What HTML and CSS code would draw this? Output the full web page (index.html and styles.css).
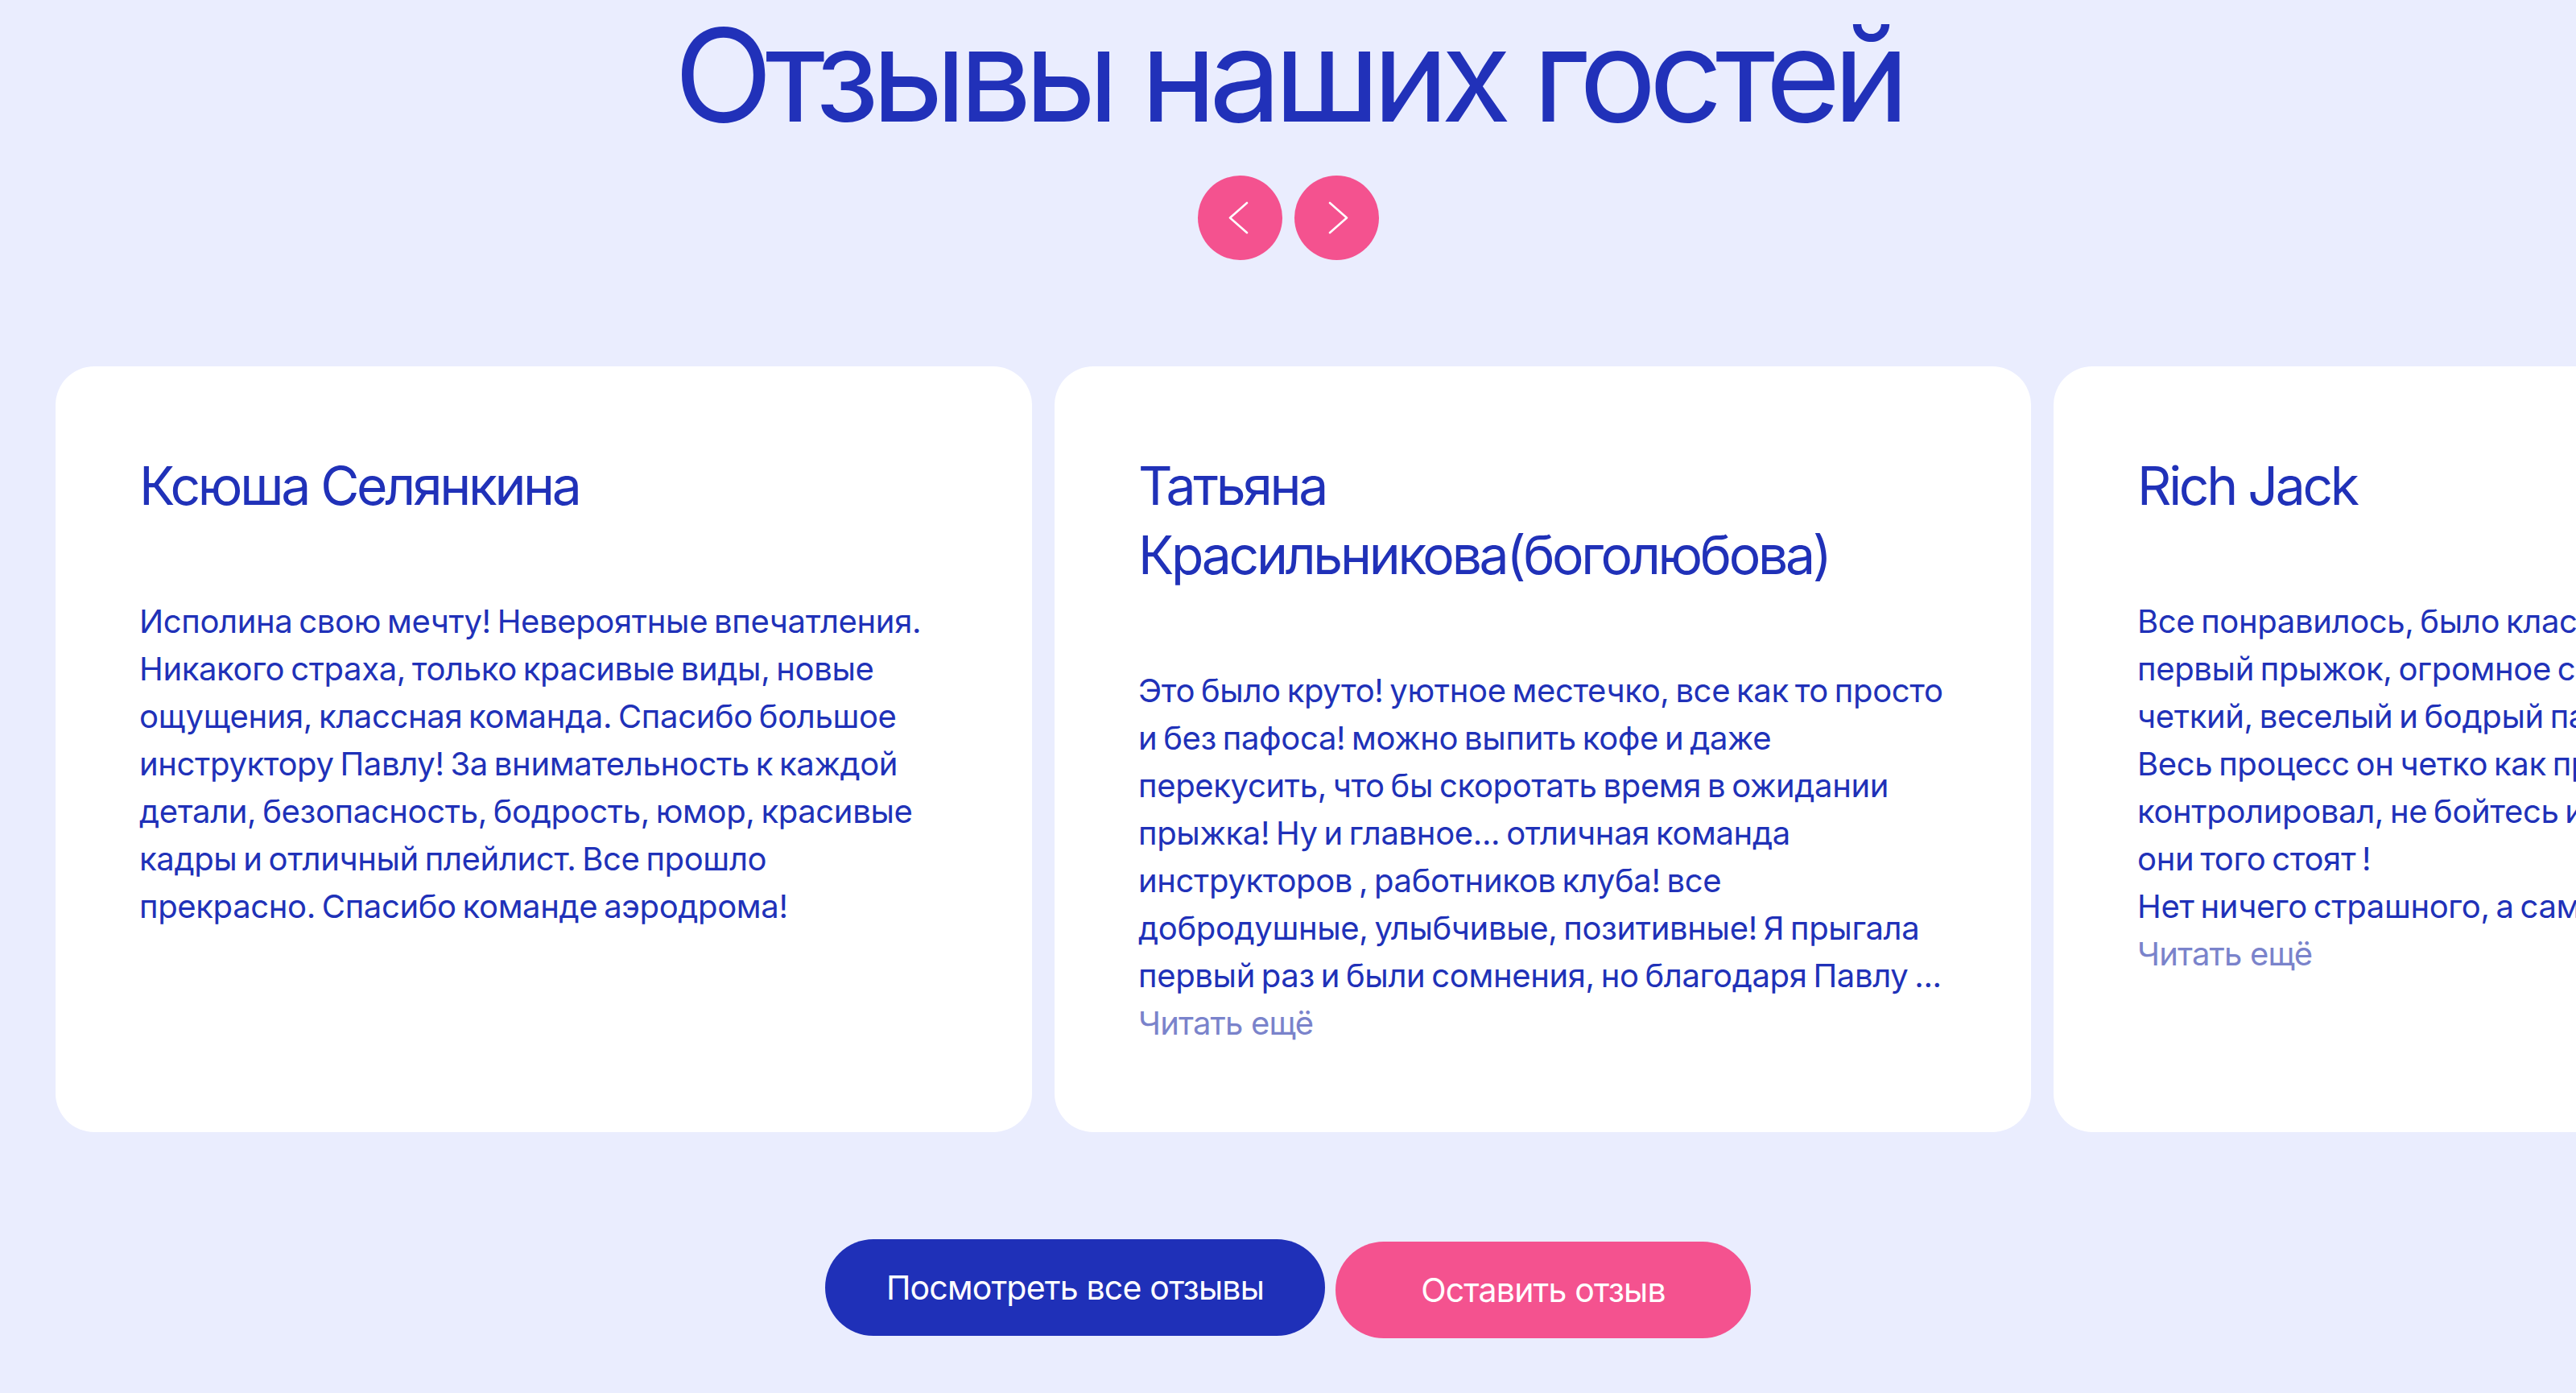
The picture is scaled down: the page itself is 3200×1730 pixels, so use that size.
FILE: index.html
```html
<!DOCTYPE html>
<html lang="ru">
<head>
<meta charset="utf-8">
<title>Отзывы наших гостей</title>
<link rel="stylesheet" href="styles.css">
</head>
<body>
<section class="reviews">
  <h2 class="reviews-title">Отзывы наших гостей</h2>

  <div class="reviews-nav">
    <button class="nav-btn" type="button" aria-label="Назад">
      <svg viewBox="0 0 105 105" width="105" height="105"><path d="M61 34 L40 52.5 L61 71"/></svg>
    </button>
    <button class="nav-btn" type="button" aria-label="Вперёд">
      <svg viewBox="0 0 105 105" width="105" height="105"><path d="M44 34 L65 52.5 L44 71"/></svg>
    </button>
  </div>

  <div class="reviews-viewport">
    <div class="reviews-track">
      <article class="review-card">
        <h3 class="review-name">Ксюша Селянкина</h3>
        <p class="review-text">Исполина свою мечту! Невероятные впечатления. Никакого страха, только красивые виды, новые ощущения, классная команда. Спасибо большое инструктору Павлу! За внимательность к каждой детали, безопасность, бодрость, юмор, красивые кадры и отличный плейлист. Все прошло прекрасно. Спасибо команде аэродрома!</p>
      </article>

      <article class="review-card">
        <h3 class="review-name">Татьяна Красильникова(боголюбова)</h3>
        <p class="review-text">Это было круто! уютное местечко, все как то просто и без пафоса! можно выпить кофе и даже перекусить, что бы скоротать время в ожидании прыжка! Ну и главное... отличная команда инструкторов , работников клуба! все добродушные, улыбчивые, позитивные! Я прыгала первый раз и были сомнения, но благодаря Павлу&nbsp;...</p>
        <a class="review-more" href="#">Читать ещё</a>
      </article>

      <article class="review-card">
        <h3 class="review-name">Rich Jack</h3>
        <p class="review-text">Все понравилось, было классно! Совершил свой<br>первый прыжок, огромное спасибо Павлу за<br>четкий, веселый и бодрый парашютный настрой!<br>Весь процесс он четко как профессионал<br>контролировал, не бойтесь и прыгайте,<br>они того стоят !<br>Нет ничего страшного, а самое главное ...</p>
        <a class="review-more" href="#">Читать ещё</a>
      </article>
    </div>
  </div>

  <div class="reviews-actions">
    <a class="btn btn-primary" href="#">Посмотреть все отзывы</a>
    <a class="btn btn-accent" href="#">Оставить отзыв</a>
  </div>
</section>
</body>
</html>
```

FILE: styles.css
```css
html, body {
  margin: 0;
  padding: 0;
}

body {
  background: #eaedfe;
  font-family: Inter, "Noto Sans", "Liberation Sans", sans-serif;
  color: #2031b8;
  overflow: hidden;
}

.reviews {
  display: flex;
  flex-direction: column;
  align-items: stretch;
  padding-top: 13px;
}

.reviews-title {
  margin: 0;
  font-size: 160px;
  line-height: 160px;
  font-weight: 400;
  letter-spacing: -0.058em;
  text-align: center;
  color: #2131b9;
}

.reviews-nav {
  display: flex;
  justify-content: center;
  gap: 15px;
  margin-top: 45px;
}

.nav-btn {
  width: 105px;
  height: 105px;
  padding: 0;
  border: 0;
  border-radius: 50%;
  background: #f4528f;
  cursor: pointer;
  display: block;
}

.nav-btn svg {
  display: block;
}

.nav-btn path {
  fill: none;
  stroke: #ffffff;
  stroke-width: 2.6;
  stroke-linecap: round;
  stroke-linejoin: round;
}

.reviews-viewport {
  margin-top: 132px;
  overflow: hidden;
}

.reviews-track {
  display: flex;
  gap: 28px;
  padding-left: 69px;
}

.review-card {
  flex: 0 0 1213px;
  box-sizing: border-box;
  height: 951px;
  padding: 105px 109px 104px 104px;
  background: #ffffff;
  border-radius: 48px;
}

.review-name {
  margin: 0;
  font-size: 66px;
  line-height: 86px;
  font-weight: 400;
  letter-spacing: -0.05em;
  color: #2031b8;
}

.review-text {
  margin: 96px 0 0;
  font-size: 40px;
  line-height: 59px;
  font-weight: 400;
  letter-spacing: -0.35px;
  word-spacing: -3px;
  color: #2031b8;
}

.review-more {
  display: block;
  font-size: 40px;
  line-height: 59px;
  letter-spacing: -0.02em;
  color: #7a83cb;
  text-decoration: none;
}

.reviews-actions {
  display: flex;
  justify-content: center;
  align-items: flex-start;
  gap: 13px;
  margin-top: 133px;
}

.btn {
  box-sizing: border-box;
  height: 120px;
  display: flex;
  align-items: center;
  justify-content: center;
  border-radius: 60px;
  font-size: 41px;
  letter-spacing: -0.02em;
  color: #ffffff;
  text-decoration: none;
}

.btn-primary {
  width: 621px;
  background: #1f30b8;
}

.btn-accent {
  width: 516px;
  margin-top: 3px;
  background: #f4528f;
}
```
